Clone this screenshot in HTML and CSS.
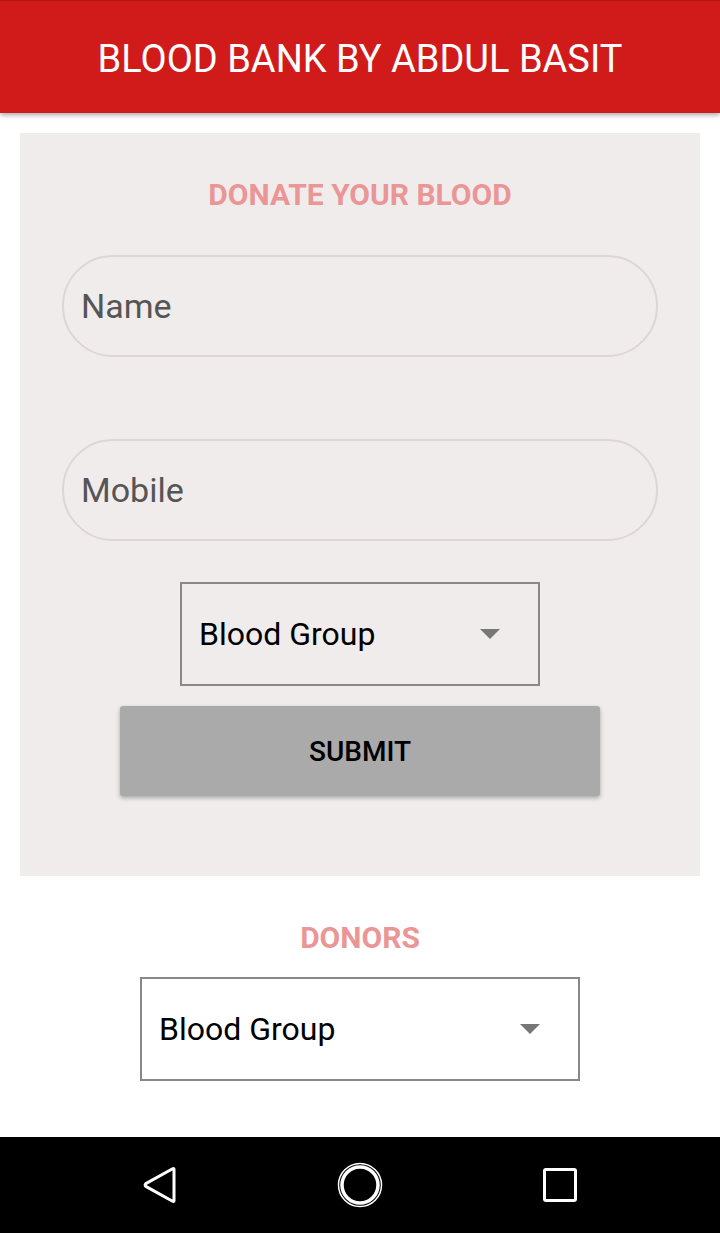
FILE: index.html
```html
<!DOCTYPE html>
<html>
<head>
<meta charset="utf-8">
<link rel="stylesheet" href="styles.css">
</head>
<body>
<div class="screen">
  <header class="appbar">BLOOD BANK BY ABDUL BASIT</header>
  <main class="content">
    <section class="card">
      <h2 class="section-title">DONATE YOUR BLOOD</h2>
      <div class="field"><span class="placeholder">Name</span></div>
      <div class="field field-second"><span class="placeholder">Mobile</span></div>
      <div class="select select-small">
        <span class="select-text">Blood Group</span>
        <span class="arrow"></span>
      </div>
      <div class="button">SUBMIT</div>
    </section>
    <section class="donors">
      <h2 class="section-title">DONORS</h2>
      <div class="select select-large">
        <span class="select-text">Blood Group</span>
        <span class="arrow"></span>
      </div>
    </section>
  </main>
  <nav class="navbar">
    <svg class="nav-icon" width="40" height="40" viewBox="0 0 40 40">
      <path d="M34 4.5 L34 35.5 Q34 37 32.6 36.2 L5.8 21.4 Q4.4 20 5.8 18.6 L32.6 3.8 Q34 3 34 4.5 Z" fill="none" stroke="#fff" stroke-width="3" stroke-linejoin="round"/>
    </svg>
    <svg class="nav-icon" width="48" height="48" viewBox="0 0 48 48">
      <circle cx="24" cy="24" r="21.5" fill="none" stroke="#fff" stroke-width="1.5"/>
      <circle cx="24" cy="24" r="18" fill="none" stroke="#fff" stroke-width="3.5"/>
    </svg>
    <svg class="nav-icon" width="40" height="40" viewBox="0 0 40 40">
      <rect x="4.5" y="4.5" width="31" height="31" rx="1.5" fill="none" stroke="#fff" stroke-width="3"/>
    </svg>
  </nav>
</div>
</body>
</html>
```
FILE: styles.css
```css
* { box-sizing: border-box; }
html, body { margin: 0; padding: 0; }
body {
  width: 720px;
  height: 1233px;
  font-family: Roboto, "Liberation Sans", sans-serif;
  background: #ffffff;
  overflow: hidden;
}
.screen {
  display: flex;
  flex-direction: column;
  height: 1233px;
}
.appbar {
  height: 113px;
  background: #d11a1a;
  border-top: 1px solid #b01515;
  color: #ffffff;
  font-size: 38px;
  font-weight: 400;
  display: flex;
  align-items: center;
  justify-content: center;
  box-shadow: 0 2px 5px rgba(0,0,0,0.35);
  position: relative;
  z-index: 2;
  padding-top: 3px;
}
.content {
  flex: 1;
  padding: 20px 20px 0;
  display: flex;
  flex-direction: column;
}
.card {
  background: #f0ecec;
  height: 743px;
  display: flex;
  flex-direction: column;
  align-items: center;
  padding-top: 44px;
}
.section-title {
  margin: 0;
  font-size: 30px;
  font-weight: 700;
  color: #eb9696;
  line-height: 36px;
}
.field {
  width: 596px;
  height: 102px;
  margin-top: 42px;
  border: 2px solid #dcd6da;
  border-radius: 51px;
  display: flex;
  align-items: center;
  padding-left: 17px;
}
.field-second { margin-top: 82px; }
.placeholder {
  font-size: 34px;
  color: #555555;
}
.select {
  height: 104px;
  border: 2px solid #888888;
  display: flex;
  align-items: center;
  justify-content: space-between;
  padding-left: 17px;
}
.select-small {
  width: 360px;
  margin-top: 41px;
  padding-right: 38px;
}
.select-large {
  width: 440px;
  padding-right: 38px;
}
.select-text {
  font-size: 32px;
  color: #000000;
}
.arrow {
  width: 0;
  height: 0;
  border-left: 10px solid transparent;
  border-right: 10px solid transparent;
  border-top: 10px solid #777777;
}
.button {
  width: 480px;
  height: 90px;
  margin-top: 20px;
  background: #aaaaaa;
  border-radius: 3px;
  box-shadow: 0 2px 4px rgba(0,0,0,0.3);
  display: flex;
  align-items: center;
  justify-content: center;
  font-size: 28px;
  font-weight: 500;
  color: #000000;
}
.donors {
  display: flex;
  flex-direction: column;
  align-items: center;
  padding-top: 44px;
  gap: 21px;
}
.navbar {
  height: 96px;
  background: #000000;
  display: flex;
  align-items: center;
  justify-content: space-between;
  padding: 0 140px 0 140px;
}
.nav-icon { display: block; }
```
